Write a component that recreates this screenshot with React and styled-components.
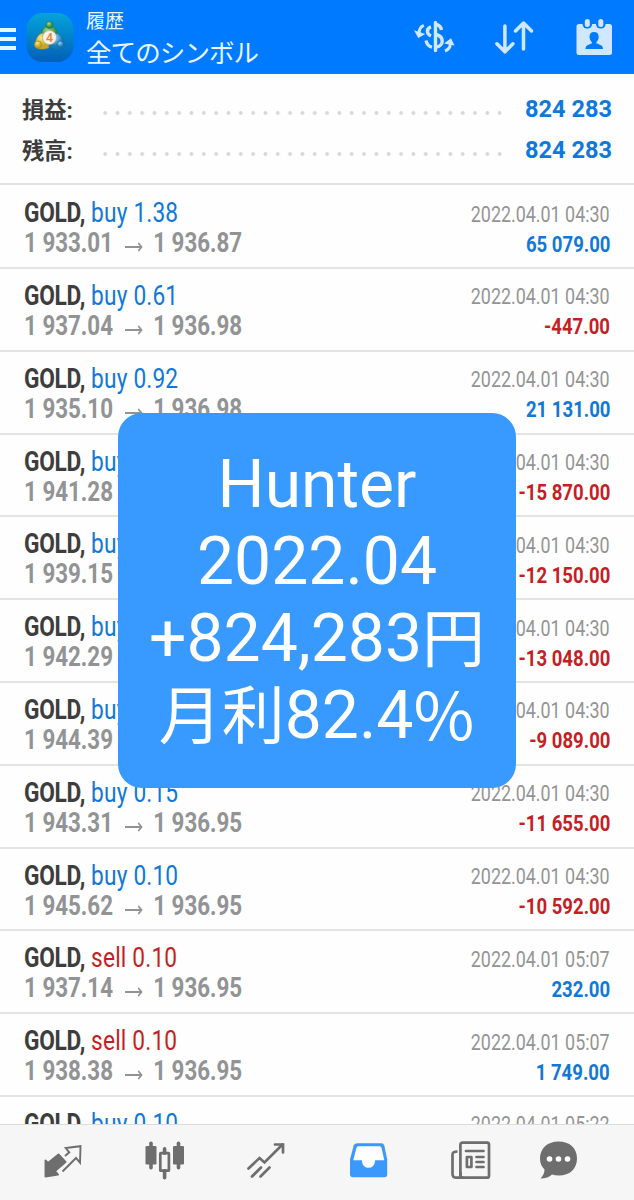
import React from 'react';
import styled, { createGlobalStyle } from 'styled-components';

const GlobalStyle = createGlobalStyle`
  body {
    margin: 0;
    background: #fff;
    overflow: hidden;
  }

  * {
    box-sizing: border-box;
  }
`;

const Screen = styled.div`
  position: relative;
  display: flex;
  flex-direction: column;
  width: 634px;
  height: 1200px;
  overflow: hidden;
  background: #fefefe;
  font-family: Roboto, 'Noto Sans CJK JP', sans-serif;
  white-space: nowrap;
`;

const Header = styled.header`
  display: flex;
  flex: none;
  height: 74px;
  background: #007aff;
  border-bottom: 1px solid #2a78cf;
  color: #e9f5ff;
`;

const MenuLines = styled.div`
  display: flex;
  flex-direction: column;
  gap: 5.3px;
  width: 15.5px;
  margin-top: 27.5px;

  span {
    height: 4px;
    background: #e4f6ff;
  }
`;

const AppLogo = styled.svg`
  width: 50px;
  height: 52px;
  margin: 12px 0 0 9px;
`;

const Titles = styled.div`
  display: flex;
  flex-direction: column;
  width: 340px;
  padding: 8px 0 0 11.5px;
`;

const Title = styled.span`
  font-size: 19px;
  line-height: 27px;
`;

const Subtitle = styled.span`
  margin-top: 1px;
  font-size: 25.5px;
  line-height: 34px;
  letter-spacing: -0.9px;
`;

const HeaderIcon = styled.svg`
  flex: none;
  width: 44px;
  height: 40px;
  margin: 18px 0 0 ${props => props.$gap}px;
`;

const Summary = styled.section`
  display: flex;
  flex: none;
  flex-direction: column;
  gap: 1px;
  height: 111px;
  padding: 14.5px 22px 0;
  border-bottom: 2px solid #e2e2e2;
`;

const SummaryRow = styled.div`
  display: flex;
  align-items: center;
  height: 40px;
`;

const SummaryLabel = styled.span`
  width: 76.5px;
  margin-top: -2px;
  color: #3c3c3c;
  font-size: 22.3px;
  font-weight: 700;
`;

const Leader = styled.span`
  width: 407.2px;
  height: 6px;
  margin-top: 9px;
  background: radial-gradient(circle, #d8d8d8 1.5px, transparent 2.3px) 0 0 / 12.34px 6px;
`;

const SummaryValue = styled.span`
  flex: 1;
  padding-top: 1px;
  color: #0f78d8;
  font-size: 23.6px;
  font-weight: 700;
  text-align: right;
`;

const List = styled.main`
  flex: 1;
  min-height: 0;
  padding-top: 1.2px;
  overflow: hidden;
`;

const Deal = styled.div`
  display: flex;
  justify-content: space-between;
  height: 82.8px;
  padding: 12px 24px 0 23.5px;
  border-bottom: 2px solid #e4e4e4;
`;

const Column = styled.div`
  display: flex;
  flex-direction: column;
  align-items: ${props => (props.$right ? 'flex-end' : 'flex-start')};
  padding-top: ${props => (props.$right ? '1.5px' : '0')};
`;

const Narrow = styled.span`
  transform: scaleX(${props => props.$scale});
  transform-origin: ${props => (props.$right ? 'right' : 'left')} center;
`;

const Symbol = styled(Narrow)`
  color: #3d3d3d;
  font-size: 27px;
  line-height: 30px;
  font-weight: 700;
  letter-spacing: -0.35px;

  span {
    margin-left: 1px;
    color: ${props => (props.$side === 'sell' ? '#c41f24' : '#1178d6')};
    font-weight: 400;
    letter-spacing: 0.2px;
  }
`;

const Prices = styled(Narrow)`
  color: #929394;
  font-size: 27px;
  line-height: 30px;
  font-weight: 700;

  svg {
    width: 23px;
    height: 10px;
    margin: 0 12.5px 0 13px;
  }
`;

const Time = styled(Narrow)`
  color: #949494;
  font-size: 22.5px;
  line-height: 29px;
`;

const Profit = styled(Narrow)`
  color: ${props => (props.$loss ? '#c41f24' : '#1178d6')};
  font-size: 22.5px;
  line-height: 30px;
  font-weight: 700;
`;

const Banner = styled.div`
  position: absolute;
  top: 412.5px;
  left: 118px;
  width: 398px;
  height: 375px;
  padding-top: 33px;
  border-radius: 24px;
  background: #3899fe;
  color: #fff;
  font-size: 66px;
  line-height: 77px;
  text-align: center;

  div {
    height: 77px;
  }
`;

const Kanji = styled.span`
  font-size: 63px;
  line-height: 1;
`;

const Percent = styled.span`
  font-family: 'Noto Sans CJK JP', sans-serif;
  line-height: 1;
  letter-spacing: 1px;
  vertical-align: -2px;
`;

const TabBar = styled.nav`
  display: flex;
  flex: none;
  height: 76.5px;
  padding: 15px 0 0 43px;
  border-top: 1.5px solid #dcdcdc;
  background: #f6f6f6;
  color: #6e6e6e;
`;

const TabIcon = styled.svg`
  flex: none;
  width: 40px;
  height: 40px;
  margin-right: ${props => props.$gap || 62}px;
`;

const deals = [
  ['buy', '1.38', '1 933.01', '1 936.87', '2022.04.01 04:30', '65 079.00'],
  ['buy', '0.61', '1 937.04', '1 936.98', '2022.04.01 04:30', '-447.00'],
  ['buy', '0.92', '1 935.10', '1 936.98', '2022.04.01 04:30', '21 131.00'],
  ['buy', '0.35', '1 941.28', '1 936.95', '2022.04.01 04:30', '-15 870.00'],
  ['buy', '0.45', '1 939.15', '1 936.95', '2022.04.01 04:30', '-12 150.00'],
  ['buy', '0.20', '1 942.29', '1 936.95', '2022.04.01 04:30', '-13 048.00'],
  ['buy', '0.10', '1 944.39', '1 936.95', '2022.04.01 04:30', '-9 089.00'],
  ['buy', '0.15', '1 943.31', '1 936.95', '2022.04.01 04:30', '-11 655.00'],
  ['buy', '0.10', '1 945.62', '1 936.95', '2022.04.01 04:30', '-10 592.00'],
  ['sell', '0.10', '1 937.14', '1 936.95', '2022.04.01 05:07', '232.00'],
  ['sell', '0.10', '1 938.38', '1 936.95', '2022.04.01 05:07', '1 749.00'],
  ['buy', '0.10', '1 938.38', '1 936.95', '2022.04.01 05:22', '1 749.00'],
];

const Logo = () => (
  <AppLogo viewBox="0 0 50 52">
    <defs>
      <linearGradient id="tile" x1="0" y1="0" x2="0" y2="1">
        <stop offset="0" stopColor="#06a3da" />
        <stop offset="1" stopColor="#0060b8" />
      </linearGradient>
      <radialGradient id="green" cx="0.4" cy="0.3">
        <stop offset="0" stopColor="#a8dc84" />
        <stop offset="1" stopColor="#2e8a45" />
      </radialGradient>
      <radialGradient id="yellow" cx="0.4" cy="0.3">
        <stop offset="0" stopColor="#f8ea7c" />
        <stop offset="1" stopColor="#c9a526" />
      </radialGradient>
      <radialGradient id="sky" cx="0.4" cy="0.3">
        <stop offset="0" stopColor="#8bd5f5" />
        <stop offset="1" stopColor="#1978b8" />
      </radialGradient>
    </defs>
    <rect x="1.5" y="1" width="47" height="49" rx="16" fill="url(#tile)" />
    <path d="M16 25c0-8 4-11 8.500-11s8.500 3 8.500 11l-8.500 4z" fill="url(#green)" stroke="#2c7655" strokeWidth="0.6" />
    <path d="M17 21c-5 2-7 8-7 14 4 3 10 3 15 0l-1-9z" fill="url(#yellow)" stroke="#8c8740" strokeWidth="0.6" />
    <path d="M32 21c5 2 7 8 7 14-4 3-10 3-15 0l1-9z" fill="url(#sky)" stroke="#17679d" strokeWidth="0.6" />
    <circle cx="24.500" cy="13" r="3.600" fill="url(#green)" stroke="#257447" strokeWidth="0.6" />
    <circle cx="13" cy="32.500" r="3.600" fill="url(#yellow)" stroke="#93832e" strokeWidth="0.6" />
    <circle cx="35.500" cy="32.500" r="3.600" fill="url(#sky)" stroke="#17679d" strokeWidth="0.6" />
    <circle cx="24.500" cy="25.500" r="7" fill="#f4f2ea" stroke="#a6ad85" strokeWidth="0.7" />
    <text x="24.500" y="30" textAnchor="middle" fontSize="12.500" fontWeight="500" fill="#f08030">4</text>
  </AppLogo>
);

const CurrencyIcon = () => (
  <HeaderIcon $gap={-0.5} viewBox="0 0 44 40" fill="none" stroke="#d0e8ff" strokeWidth="3.400">
    <path d="M21.500 4.500v28" strokeLinecap="round" />
    <path d="M22 6.500c3.500.5 5 2.500 5.500 5.500M22 16.500c4 1 6.200 3.200 6.200 6.500s-2.400 5.800-6.200 6" />
    <path d="M17 8.800c-4.500 1.400-5 7 0 9.200M12 22.500c.8 3.600 2.800 6 6 6.700" />
    <path d="M9.800 7.300c-3.200 1.300-4.800 3.700-4.600 7.700" strokeWidth="3" />
    <path d="M0 12.300l4.300 7.700 7-4z" fill="#d0e8ff" stroke="none" />
    <path d="M31 33c3.500-1.300 5.300-4 5.300-7.500" strokeWidth="3" />
    <path d="M30 25.500l7-5.200 3.500 7.200z" fill="#d0e8ff" stroke="none" />
  </HeaderIcon>
);

const SortIcon = () => (
  <HeaderIcon $gap={33.5} viewBox="0 0 44 40" fill="none" stroke="#d0e8ff" strokeWidth="3.500" strokeLinecap="round" strokeLinejoin="round">
    <path d="M12.900 8v26M4.900 25.800l8 8 8-8M31.500 31V5M23.500 13l8-8 8 8" />
  </HeaderIcon>
);

const CalendarIcon = () => (
  <HeaderIcon $gap={36} viewBox="0 0 44 40">
    <rect x="4.500" y="6" width="35.500" height="31" rx="2.500" fill="#d0e8ff" />
    <rect x="10.500" y="-0.500" width="9.600" height="11" rx="4.500" fill="#007aff" />
    <rect x="24" y="-0.500" width="9.600" height="11" rx="4.500" fill="#007aff" />
    <rect x="12.800" y="1" width="5" height="8" rx="2.500" fill="#d0e8ff" />
    <rect x="26.300" y="1" width="5" height="8" rx="2.500" fill="#d0e8ff" />
    <path d="M22 14c3 0 4.700 2 4.700 4.700 0 2-1 4-2.200 5.200v1.600c3 1 6.500 1.500 6.500 5.500H13.500c0-4 3.500-4.500 6.300-5.500v-1.600c-1.300-1.200-2.300-3.200-2.300-5.200C17.500 16 19 14 22 14z" fill="#007aff" />
  </HeaderIcon>
);

const DealRow = ({ deal }) => {
  const [side, volume, open, close, time, profit] = deal;

  return (
    <Deal>
      <Column>
        <Symbol $side={side} $scale={0.84}>GOLD, <span>{side} {volume}</span></Symbol>
        <Prices $scale={0.828}>
          {open}
          <svg viewBox="0 0 23 10" fill="none" stroke="#929394" strokeWidth="1.800">
            <path d="M1 5h20M17 1l4 4-4 4" />
          </svg>
          {close}
        </Prices>
      </Column>
      <Column $right>
        <Time $right $scale={0.795}>{time}</Time>
        <Profit $right $scale={0.825} $loss={profit.startsWith('-')}>{profit}</Profit>
      </Column>
    </Deal>
  );
};

const Tabs = () => (
  <TabBar>
    <TabIcon viewBox="0 0 40 40" fill="none" stroke="currentColor" strokeWidth="1.900">
      <path d="M2.500 20.500l2.500 2.500 10.500-8.500 7 7.500-10.500 9 3 3.500-12.500 2z" fill="currentColor" strokeLinejoin="round" />
      <path d="M22 16l4.300-3.700-3.600-4.300L37.500 6.200l-.5 16.500-4-4.700-13.500 13.500" />
    </TabIcon>
    <TabIcon viewBox="0 0 40 40" fill="currentColor">
      <rect x="0.500" y="6" width="11" height="18.500" rx="1.300" />
      <rect x="4.200" y="1.500" width="3.600" height="28" rx="1.700" />
      <rect x="28" y="6" width="11" height="18.500" rx="1.300" />
      <rect x="31.700" y="1.500" width="3.600" height="28" rx="1.700" />
      <rect x="17.800" y="7" width="3.600" height="8" rx="1.700" />
      <rect x="17.800" y="29" width="3.600" height="10.500" rx="1.700" />
      <rect x="15.300" y="13.200" width="8.600" height="17.500" rx="0.500" fill="none" stroke="currentColor" strokeWidth="2.700" />
    </TabIcon>
    <TabIcon viewBox="0 0 40 40" fill="none" stroke="currentColor" strokeWidth="2.700" strokeLinecap="round">
      <path d="M1.500 28.500l11-10.500 5 4.500L35.500 4.500M5 36.500l9-9M13.500 36.500l9-9" />
      <path d="M28 4.500h8v8" />
    </TabIcon>
    <TabIcon viewBox="0 0 40 40">
      <path d="M9 3h24q2 0 2.700 2l3 14v15q0 3-2.500 3H4.200Q1.500 37 1.500 34V19L5.300 5Q6 3 9 3z" fill="#3b99fc" transform="translate(-0.500 0.300)" />
      <path d="M9.500 6h21.800q1.200 0 1.700 1.500L35.800 20H26.500v1a6.500 6.500 0 0 1-13 0v-1H4.700L8 7.500Q8.500 6 9.500 6z" fill="#fff" transform="translate(-0.500 0.300)" />
    </TabIcon>
    <TabIcon $gap={48} viewBox="0 0 40 40" fill="none" stroke="currentColor" strokeWidth="2.700" strokeLinejoin="round">
      <rect x="9.400" y="2.700" width="28.600" height="35" rx="2" />
      <path d="M6.500 11.500q-5 0-5 3V34q0 3.700 4 3.700h7M9.500 32v5" />
      <path d="M15 11h17.500M25.500 17h7M25.500 22h7M25.500 27h7" strokeLinecap="round" />
      <rect x="15.900" y="17" width="4.500" height="10" />
    </TabIcon>
    <TabIcon viewBox="0 0 40 40">
      <path d="M19.500 1.500C30.500 1.500 38 8 38 18.500S30.500 35.500 20 35.500q-4 0-7-1Q9 38.500 1.500 38.500q4-4 4-9Q1 25 1 18.500C1 8 9 1.500 19.500 1.500z" fill="currentColor" />
      <circle cx="10.500" cy="19" r="2.800" fill="#fff" />
      <circle cx="19.500" cy="19" r="2.800" fill="#fff" />
      <circle cx="28.500" cy="19" r="2.800" fill="#fff" />
    </TabIcon>
  </TabBar>
);

const App = () => {
  return (
    <Screen>
      <GlobalStyle />
      <Header>
        <MenuLines>
          <span />
          <span />
          <span />
        </MenuLines>
        <Logo />
        <Titles>
          <Title>履歴</Title>
          <Subtitle>全てのシンボル</Subtitle>
        </Titles>
        <CurrencyIcon />
        <SortIcon />
        <CalendarIcon />
      </Header>
      <Summary>
        <SummaryRow>
          <SummaryLabel>損益:</SummaryLabel>
          <Leader />
          <SummaryValue>824 283</SummaryValue>
        </SummaryRow>
        <SummaryRow>
          <SummaryLabel>残高:</SummaryLabel>
          <Leader />
          <SummaryValue>824 283</SummaryValue>
        </SummaryRow>
      </Summary>
      <List>
        {deals.map((deal, index) => (
          <DealRow key={index} deal={deal} />
        ))}
      </List>
      <Tabs />
      <Banner>
        <div>Hunter</div>
        <div>2022.04</div>
        <div>+824,283<Kanji>円</Kanji></div>
        <div><Kanji>月利</Kanji>82.4<Percent>%</Percent></div>
      </Banner>
    </Screen>
  );
};

export default App;
